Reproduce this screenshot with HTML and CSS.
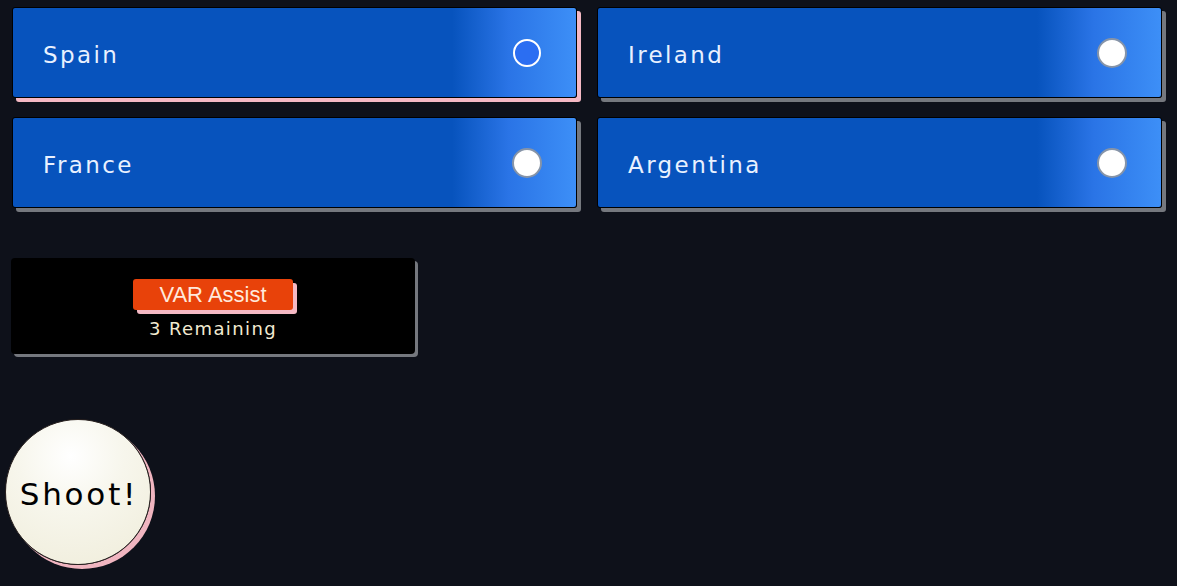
FILE: index.html
```html
<!DOCTYPE html>
<html>
<head>
<meta charset="utf-8">
<link rel="stylesheet" href="styles.css">
</head>
<body>
<div class="page">
  <div class="options">
    <div class="option selected"><span class="label">Spain</span><span class="radio"></span></div>
    <div class="option"><span class="label">Ireland</span><span class="radio"></span></div>
    <div class="option"><span class="label">France</span><span class="radio"></span></div>
    <div class="option"><span class="label">Argentina</span><span class="radio"></span></div>
  </div>
  <div class="var-box">
    <div class="var-badge">VAR Assist</div>
    <div class="var-remaining">3 Remaining</div>
  </div>
  <div class="shoot-wrap">
    <div class="shoot">Shoot!</div>
  </div>
</div>
</body>
</html>
```
FILE: styles.css
```css
html, body {
  margin: 0;
  padding: 0;
  background: #0e111a;
  height: 100%;
}
.page {
  padding: 7px 15px 0 12px;
  font-family: "DejaVu Sans", "Lato", sans-serif;
}
.options {
  display: grid;
  grid-template-columns: 565px 565px;
  column-gap: 20px;
  row-gap: 19px;
}
.option {
  box-sizing: border-box;
  height: 91px;
  border: 1.5px solid #000;
  border-radius: 3px;
  background: linear-gradient(90deg, #0753bd 0%, #0753bd 78%, #2a74e6 88%, #3d8ff7 100%);
  box-shadow: 4px 4px 0 #75787e;
  display: flex;
  align-items: center;
  justify-content: space-between;
  padding: 0 34px 0 30px;
}
.option.selected {
  box-shadow: 4px 4px 0 #f5b9c4;
}
.label {
  color: #e9f1ff;
  font-size: 23px;
  letter-spacing: 2.4px;
  font-weight: 400;
  padding-top: 4px;
}
.radio {
  box-sizing: border-box;
  width: 30px;
  height: 30px;
  border-radius: 50%;
  background: #fff;
  border: 2px solid #8694a8;
}
.option.selected .radio {
  background: #2b6ef2;
  border: 2px solid #fff;
  width: 28px;
  height: 28px;
  margin-right: 1px;
}
.var-box {
  margin-top: 50px;
  margin-left: -1px;
  box-sizing: border-box;
  width: 404px;
  height: 96px;
  background: #000;
  border-radius: 4px;
  box-shadow: 3px 3px 0 #75787e;
  display: flex;
  flex-direction: column;
  align-items: center;
  padding-top: 21px;
}
.var-badge {
  background: #e8420a;
  color: #ffe9dc;
  font-family: "Liberation Sans", Arial, sans-serif;
  font-size: 22px;
  line-height: 31px;
  height: 31px;
  width: 160px;
  text-align: center;
  border-radius: 3px;
  box-shadow: 4px 4px 0 #f5b9c4;
}
.var-remaining {
  color: #f2ead0;
  font-size: 18px;
  margin-top: 8px;
  letter-spacing: 1.4px;
}
.shoot-wrap {
  margin-top: 65px;
  margin-left: -7px;
}
.shoot {
  box-sizing: border-box;
  width: 146px;
  height: 146px;
  border-radius: 50%;
  border: 1px solid #2a2220;
  background: radial-gradient(circle at 45% 25%, #ffffff 0%, #f7f6ec 40%, #efecd9 100%);
  box-shadow: 4px 4px 0 #f0b5c0;
  display: flex;
  align-items: center;
  justify-content: center;
  color: #000;
  font-size: 31px;
  letter-spacing: 2.8px;
  padding: 3px 0 0 2px;
}
```
